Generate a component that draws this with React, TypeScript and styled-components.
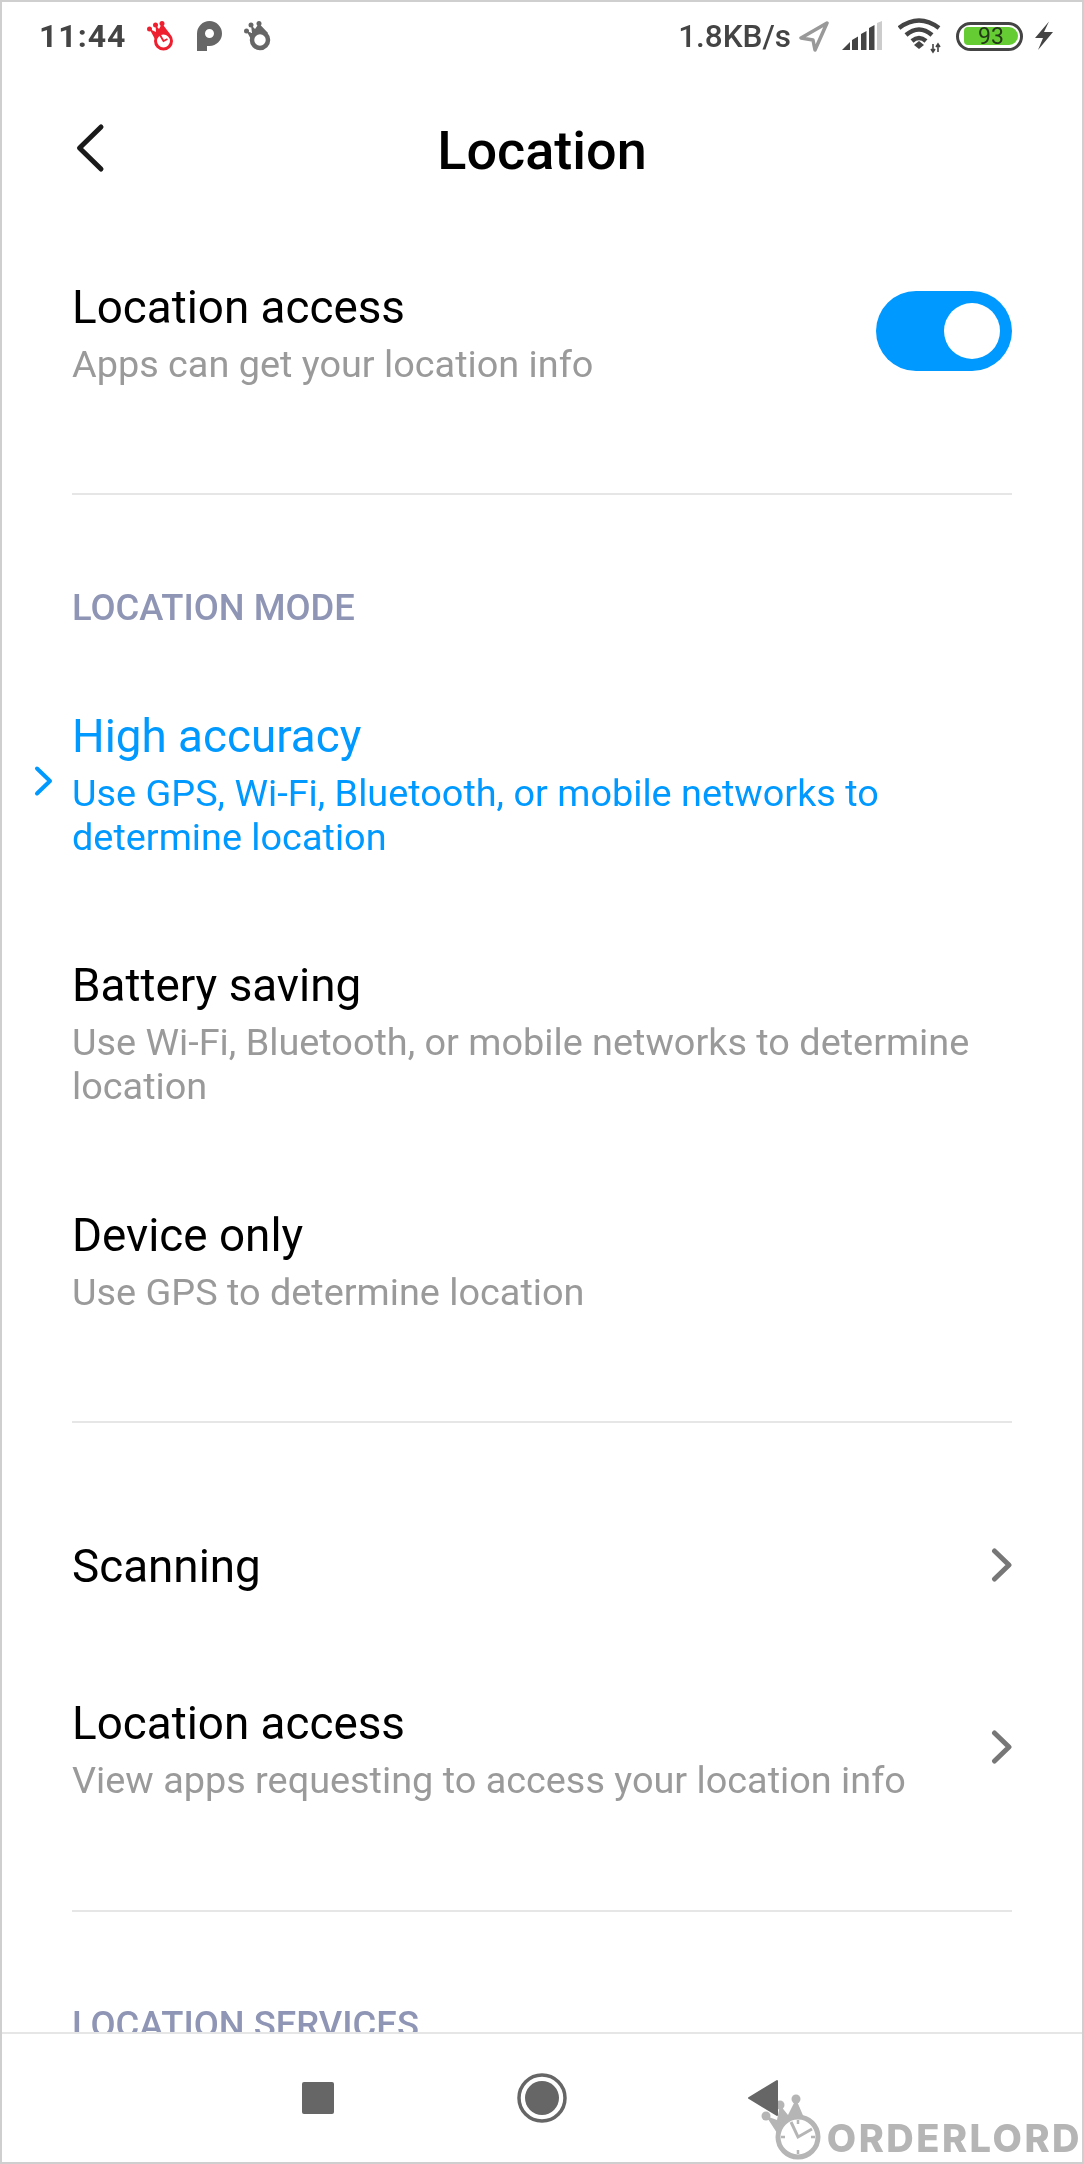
import React from 'react';
import styled, { createGlobalStyle } from 'styled-components';

const GlobalStyle = createGlobalStyle`
  html, body {
    margin: 0;
    padding: 0;
    background: #ffffff;
  }
`
const Phone = styled.div`
  width: 1084px;
  height: 2164px;
  box-sizing: border-box;
  border: 2px solid #cfcfcf;
  display: flex;
  flex-direction: column;
  overflow: hidden;
  position: relative;
  background: #fff;
  font-family: Roboto, 'Liberation Sans', sans-serif;
`
const StatusBar = styled.div`
  height: 68px;
  flex: none;
  display: flex;
  align-items: center;
  padding: 0 28px 0 37px;
  color: #444;
`
const Time = styled.span`
  font-size: 32px;
  font-weight: 700;
  letter-spacing: 1px;
  margin-right: 21px;
`
const StatusIcons = styled.div`
  display: flex;
  align-items: center;
  gap: 22px;
`
const StatusRight = styled.div`
  margin-left: auto;
  display: flex;
  align-items: center;
`
const Speed = styled.span`
  font-size: 31.5px;
  font-weight: 500;
`
const Glyph = styled.svg<{ $ml: number }>`
  margin-left: ${(p) => p.$ml}px;
  flex: none;
`
const BatteryShell = styled.div`
  width: 67px;
  height: 29px;
  margin-left: 14px;
  box-sizing: border-box;
  border: 3.5px solid #444;
  border-radius: 15px;
  padding: 2.5px 2px 2.5px 5px;
  display: flex;
`
const BatteryFill = styled.div`
  flex: 1;
  background: #66cc33;
  border-radius: 4px 9px 9px 4px;
  display: flex;
  align-items: center;
  justify-content: center;
  color: #24381a;
  font-size: 23px;
  line-height: 17px;
  font-weight: 400;
`
const Header = styled.div`
  height: 160px;
  flex: none;
  position: relative;
  display: flex;
  align-items: center;
  justify-content: center;
  font-size: 54px;
  font-weight: 500;
  color: #000;
`
const BackButton = styled.svg`
  position: absolute;
  left: 72px;
  top: 53px;
`
const Content = styled.div`
  flex: 1;
  min-height: 0;
  overflow: hidden;
  padding: 0 70px;
`
const Row = styled.div<{ $top: number; $bottom: number }>`
  padding: ${(p) => p.$top}px 0 ${(p) => p.$bottom}px;
  display: flex;
  align-items: center;
  justify-content: space-between;
  position: relative;
`
const RowText = styled.div`
  display: flex;
  flex-direction: column;
`
const RowTitle = styled.div<{ $active?: boolean }>`
  font-size: 45.8px;
  line-height: 56px;
  color: ${(p) => (p.$active ? '#0099ff' : '#000')};
`
const RowSub = styled.div<{ $active?: boolean }>`
  font-size: 37.85px;
  line-height: 44px;
  margin-top: 6px;
  color: ${(p) => (p.$active ? '#0099ff' : '#9a9a9a')};
`
const Divider = styled.div`
  height: 2px;
  background: #e6e6e6;
`
const SectionLabel = styled.div<{ $top: number }>`
  font-size: 36.4px;
  line-height: 40px;
  font-weight: 500;
  color: #8f96b5;
  padding-top: ${(p) => p.$top}px;
`
const Toggle = styled.div`
  width: 136px;
  height: 80px;
  margin-bottom: 5px;
  border-radius: 40px;
  background: #0099ff;
  display: flex;
  align-items: center;
  justify-content: flex-end;
  padding-right: 12px;
  box-sizing: border-box;
`
const Knob = styled.div`
  width: 56px;
  height: 56px;
  border-radius: 50%;
  background: #fff;
`
const SelectedMark = styled.svg`
  position: absolute;
  left: -39px;
  top: 135px;
`
const ChevronIcon = styled.svg`
  margin-bottom: 4px;
  flex: none;
`
const NavBar = styled.div`
  height: 130px;
  flex: none;
  box-sizing: border-box;
  border-top: 2px solid #e6e6e6;
  background: #fff;
  display: flex;
  align-items: center;
  padding-left: 300px;
  gap: 180px;
`
const HomeIcon = styled.svg`
  margin-left: 3px;
`
const Watermark = styled.div`
  position: absolute;
  right: 0;
  bottom: 4px;
  display: flex;
  align-items: flex-end;
  color: #b5b5b5;
  font-family: Inter, 'Open Sans', sans-serif;
  font-size: 38px;
  font-weight: 800;
  line-height: 40px;
  letter-spacing: 2.5px;
  mix-blend-mode: darken;
`
const LogoMark = styled.svg`
  margin-bottom: -2px;
  flex: none;
`

const Chevron = () => (
  <ChevronIcon width="24" height="36" viewBox="0 0 24 36" fill="none">
    <path d="M6.5 4L21 18L6.5 32" stroke="#777" strokeWidth="5" strokeLinecap="round" strokeLinejoin="round" />
  </ChevronIcon>
)

const App: React.FC = () => {
  return (
    <Phone>
      <GlobalStyle />
      <StatusBar>
        <Time>11:44</Time>
        <StatusIcons>
          <svg width="28" height="30" viewBox="0 0 28 30" fill="none">
            <path d="M2.5 8L9 11L8.5 4L12 8L15 2.5L23 13L10 22z" fill="#ee2030" />
            <circle cx="2.5" cy="8" r="2.5" fill="#ee2030" />
            <circle cx="8.5" cy="4" r="2.5" fill="#ee2030" />
            <circle cx="15" cy="2.5" r="2.5" fill="#ee2030" />
            <circle cx="16.5" cy="20" r="8" fill="#fff" stroke="#ee2030" strokeWidth="3" />
            <path d="M13 14l3.5 6l4-2" stroke="#ee2030" strokeWidth="1.8" />
          </svg>
          <svg width="25" height="30" viewBox="0 0 25 30">
            <path fillRule="evenodd" d="M0 30V12.5a12.5 12.5 0 1 1 12.5 12.5H10v5zM12.5 17a4.5 4.5 0 1 0 0-9a4.5 4.5 0 0 0 0 9z" fill="#666" />
          </svg>
          <svg width="28" height="30" viewBox="0 0 28 30" fill="none">
            <path d="M2.5 10L8 12L7 4L11 8L15 2.5L24 12L9 22z" fill="#666" />
            <circle cx="2.5" cy="10" r="2.5" fill="#666" />
            <circle cx="7" cy="4" r="2.5" fill="#666" />
            <circle cx="15" cy="2.5" r="2.5" fill="#666" />
            <circle cx="16" cy="19" r="8" fill="#fff" stroke="#666" strokeWidth="4.5" />
          </svg>
        </StatusIcons>
        <StatusRight>
          <Speed>1.8KB/s</Speed>
          <Glyph $ml={8} width="30" height="32" viewBox="0 0 30 32" fill="none">
            <path d="M28 3L2 18L14 20L16 30z" stroke="#999" strokeWidth="3.5" strokeLinejoin="round" />
          </Glyph>
          <Glyph $ml={12} width="42" height="30" viewBox="0 0 42 30">
            <path d="M1 29L9 21V29zM11 29V19l6-3.5V29zM20 29V13l5.5-3V29zM28 29V7l5.5-3V29z" fill="#444" />
            <path d="M36 29V2l5-2V29z" fill="#ccc" />
          </Glyph>
          <Glyph $ml={15} width="44" height="36" viewBox="0 0 44 36" fill="none">
            <path d="M1 10Q21 -5 41 10M8 17Q21 6 34 17M14 23Q21 17 28 23" stroke="#444" strokeWidth="4.5" />
            <path d="M21 23l5 4l-5 4l-5-4z" fill="#444" />
            <path d="M35 26v8M40 26v8M33 31l2 3l2-3M38 29l2-3l2 3" stroke="#444" strokeWidth="1.6" />
          </Glyph>
          <BatteryShell>
            <BatteryFill>93</BatteryFill>
          </BatteryShell>
          <Glyph $ml={11} width="20" height="30" viewBox="0 0 20 30">
            <path d="M15 0.5L1 17H9L4 29L19 11H10z" fill="#444" />
          </Glyph>
        </StatusRight>
      </StatusBar>
      <Header>
        <BackButton width="32" height="50" viewBox="0 0 32 50" fill="none">
          <path d="M27 4L5.5 25L27 46" stroke="#1a1a1a" strokeWidth="5" strokeLinecap="round" strokeLinejoin="round" />
        </BackButton>
        Location
      </Header>
      <Content>
        <Row $top={50} $bottom={107}>
          <RowText>
            <RowTitle>Location access</RowTitle>
            <RowSub>Apps can get your location info</RowSub>
          </RowText>
          <Toggle><Knob /></Toggle>
        </Row>
        <Divider />
        <SectionLabel $top={93}>LOCATION MODE</SectionLabel>
        <Row $top={81} $bottom={50}>
          <SelectedMark width="24" height="36" viewBox="0 0 24 36" fill="none">
            <path d="M4 5.5L17 18L4 30.5" stroke="#0099ff" strokeWidth="4" strokeLinecap="round" strokeLinejoin="round" />
          </SelectedMark>
          <RowText>
            <RowTitle $active>High accuracy</RowTitle>
            <RowSub $active>Use GPS, Wi-Fi, Bluetooth, or mobile networks to determine location</RowSub>
          </RowText>
        </Row>
        <Row $top={49} $bottom={50}>
          <RowText>
            <RowTitle>Battery saving</RowTitle>
            <RowSub>Use Wi-Fi, Bluetooth, or mobile networks to determine location</RowSub>
          </RowText>
        </Row>
        <Row $top={50} $bottom={107}>
          <RowText>
            <RowTitle>Device only</RowTitle>
            <RowSub>Use GPS to determine location</RowSub>
          </RowText>
        </Row>
        <Divider />
        <Row $top={116} $bottom={50}>
          <RowTitle>Scanning</RowTitle>
          <Chevron />
        </Row>
        <Row $top={51} $bottom={108}>
          <RowText>
            <RowTitle>Location access</RowTitle>
            <RowSub>View apps requesting to access your location info</RowSub>
          </RowText>
          <Chevron />
        </Row>
        <Divider />
        <SectionLabel $top={93}>LOCATION SERVICES</SectionLabel>
      </Content>
      <NavBar>
        <svg width="32" height="32" viewBox="0 0 32 32">
          <rect width="32" height="32" rx="2" fill="#666" />
        </svg>
        <HomeIcon width="50" height="50" viewBox="0 0 50 50" fill="none">
          <circle cx="25" cy="25" r="23" stroke="#666" strokeWidth="3.5" />
          <circle cx="25" cy="25" r="17" fill="#666" />
        </HomeIcon>
        <svg width="32" height="38" viewBox="0 0 32 38">
          <path d="M30 2V36L2 19z" fill="#666" stroke="#666" strokeWidth="2" strokeLinejoin="round" />
        </svg>
      </NavBar>
      <Watermark>
        <LogoMark width="66" height="67" viewBox="0 0 66 67" fill="none">
          <path d="M5 23L16 27L19 12L27 22L35 6L44 27L16 40z" fill="#b5b5b5" />
          <circle cx="5" cy="23" r="4.5" fill="#b5b5b5" />
          <circle cx="19" cy="12" r="4.5" fill="#b5b5b5" />
          <circle cx="35" cy="6" r="4.5" fill="#b5b5b5" />
          <circle cx="37" cy="44" r="20" fill="#fff" stroke="#b5b5b5" strokeWidth="5" />
          <path d="M37 27v4M37 57v4M20 44h4M50 44h4" stroke="#b5b5b5" strokeWidth="2.5" />
          <path d="M51 36L37 44L30 29" stroke="#b5b5b5" strokeWidth="3" />
        </LogoMark>
        ORDERLORD
      </Watermark>
    </Phone>
  );
};

export default App;
